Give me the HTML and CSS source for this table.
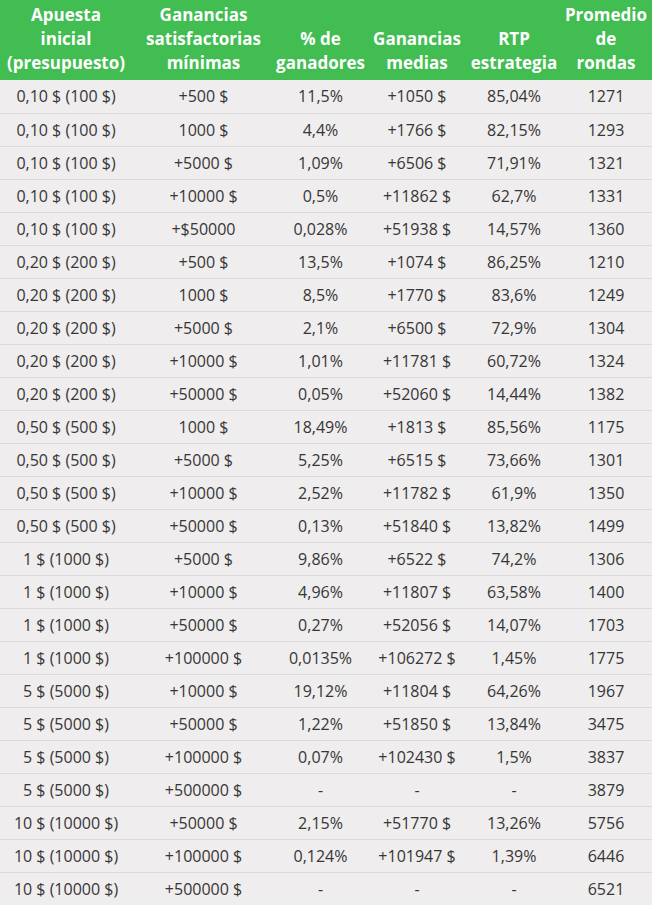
FILE: index.html
```html
<!DOCTYPE html>
<html lang="es">
<head>
<meta charset="utf-8">
<link rel="stylesheet" href="styles.css">
</head>
<body>
<table class="stats">
  <colgroup>
    <col class="c1"><col class="c2"><col class="c3"><col class="c4"><col class="c5"><col class="c6">
  </colgroup>
  <thead>
    <tr>
      <th>Apuesta<br>inicial<br>(presupuesto)</th>
      <th>Ganancias<br>satisfactorias<br>mínimas</th>
      <th>% de<br>ganadores</th>
      <th>Ganancias<br>medias</th>
      <th>RTP<br>estrategia</th>
      <th>Promedio<br>de<br>rondas</th>
    </tr>
  </thead>
  <tbody>
    <tr><td>0,10 $ (100 $)</td><td>+500 $</td><td>11,5%</td><td>+1050 $</td><td>85,04%</td><td>1271</td></tr>
    <tr><td>0,10 $ (100 $)</td><td>1000 $</td><td>4,4%</td><td>+1766 $</td><td>82,15%</td><td>1293</td></tr>
    <tr><td>0,10 $ (100 $)</td><td>+5000 $</td><td>1,09%</td><td>+6506 $</td><td>71,91%</td><td>1321</td></tr>
    <tr><td>0,10 $ (100 $)</td><td>+10000 $</td><td>0,5%</td><td>+11862 $</td><td>62,7%</td><td>1331</td></tr>
    <tr><td>0,10 $ (100 $)</td><td>+$50000</td><td>0,028%</td><td>+51938 $</td><td>14,57%</td><td>1360</td></tr>
    <tr><td>0,20 $ (200 $)</td><td>+500 $</td><td>13,5%</td><td>+1074 $</td><td>86,25%</td><td>1210</td></tr>
    <tr><td>0,20 $ (200 $)</td><td>1000 $</td><td>8,5%</td><td>+1770 $</td><td>83,6%</td><td>1249</td></tr>
    <tr><td>0,20 $ (200 $)</td><td>+5000 $</td><td>2,1%</td><td>+6500 $</td><td>72,9%</td><td>1304</td></tr>
    <tr><td>0,20 $ (200 $)</td><td>+10000 $</td><td>1,01%</td><td>+11781 $</td><td>60,72%</td><td>1324</td></tr>
    <tr><td>0,20 $ (200 $)</td><td>+50000 $</td><td>0,05%</td><td>+52060 $</td><td>14,44%</td><td>1382</td></tr>
    <tr><td>0,50 $ (500 $)</td><td>1000 $</td><td>18,49%</td><td>+1813 $</td><td>85,56%</td><td>1175</td></tr>
    <tr><td>0,50 $ (500 $)</td><td>+5000 $</td><td>5,25%</td><td>+6515 $</td><td>73,66%</td><td>1301</td></tr>
    <tr><td>0,50 $ (500 $)</td><td>+10000 $</td><td>2,52%</td><td>+11782 $</td><td>61,9%</td><td>1350</td></tr>
    <tr><td>0,50 $ (500 $)</td><td>+50000 $</td><td>0,13%</td><td>+51840 $</td><td>13,82%</td><td>1499</td></tr>
    <tr><td>1 $ (1000 $)</td><td>+5000 $</td><td>9,86%</td><td>+6522 $</td><td>74,2%</td><td>1306</td></tr>
    <tr><td>1 $ (1000 $)</td><td>+10000 $</td><td>4,96%</td><td>+11807 $</td><td>63,58%</td><td>1400</td></tr>
    <tr><td>1 $ (1000 $)</td><td>+50000 $</td><td>0,27%</td><td>+52056 $</td><td>14,07%</td><td>1703</td></tr>
    <tr><td>1 $ (1000 $)</td><td>+100000 $</td><td>0,0135%</td><td>+106272 $</td><td>1,45%</td><td>1775</td></tr>
    <tr><td>5 $ (5000 $)</td><td>+10000 $</td><td>19,12%</td><td>+11804 $</td><td>64,26%</td><td>1967</td></tr>
    <tr><td>5 $ (5000 $)</td><td>+50000 $</td><td>1,22%</td><td>+51850 $</td><td>13,84%</td><td>3475</td></tr>
    <tr><td>5 $ (5000 $)</td><td>+100000 $</td><td>0,07%</td><td>+102430 $</td><td>1,5%</td><td>3837</td></tr>
    <tr><td>5 $ (5000 $)</td><td>+500000 $</td><td>-</td><td>-</td><td>-</td><td>3879</td></tr>
    <tr><td>10 $ (10000 $)</td><td>+50000 $</td><td>2,15%</td><td>+51770 $</td><td>13,26%</td><td>5756</td></tr>
    <tr><td>10 $ (10000 $)</td><td>+100000 $</td><td>0,124%</td><td>+101947 $</td><td>1,39%</td><td>6446</td></tr>
    <tr><td>10 $ (10000 $)</td><td>+500000 $</td><td>-</td><td>-</td><td>-</td><td>6521</td></tr>
  </tbody>
</table>
</body>
</html>
```

FILE: styles.css
```css
html, body {
  margin: 0;
  padding: 0;
  background: #efeded;
}
.stats {
  width: 652px;
  border-collapse: collapse;
  table-layout: fixed;
  font-family: "Open Sans", sans-serif;
  font-size: 16px;
  color: #363636;
  background: #efeded;
}
.c1 { width: 132px; }
.c2 { width: 143px; }
.c3 { width: 91px; }
.c4 { width: 102px; }
.c5 { width: 92px; }
.c6 { width: 92px; }
.stats th {
  background: #41bd51;
  color: #ffffff;
  font-size: 17px;
  font-weight: 700;
  line-height: 24px;
  height: 80px;
  padding: 0 0 5px;
  text-align: center;
  vertical-align: bottom;
  box-sizing: border-box;
  white-space: nowrap;
}
.stats td {
  height: 33px;
  padding: 0 2px;
  line-height: 20px;
  text-align: center;
  vertical-align: middle;
  border-top: 1px solid #dadada;
  box-sizing: border-box;
  white-space: nowrap;
}
.stats tbody tr:first-child td { border-top: none; }
```
